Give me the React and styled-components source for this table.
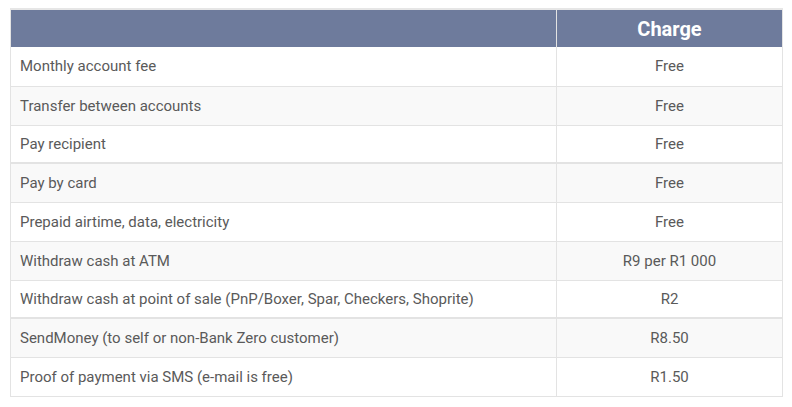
import styled, { createGlobalStyle } from "styled-components";

const rows = [
  { name: "Monthly account fee", charge: "Free" },
  { name: "Transfer between accounts", charge: "Free" },
  { name: "Pay recipient", charge: "Free", thick: true },
  { name: "Pay by card", charge: "Free" },
  { name: "Prepaid airtime, data, electricity", charge: "Free" },
  { name: "Withdraw cash at ATM", charge: "R9 per R1 000" },
  { name: "Withdraw cash at point of sale (PnP/Boxer, Spar, Checkers, Shoprite)", charge: "R2", thick: true },
  { name: "SendMoney (to self or non-Bank Zero customer)", charge: "R8.50" },
  { name: "Proof of payment via SMS (e-mail is free)", charge: "R1.50" },
];

export default function App() {
  return (
    <>
      <GlobalStyle />
      <StyledTable>
        <thead>
          <tr>
            <StyledHead />
            <StyledHead>Charge</StyledHead>
          </tr>
        </thead>
        <tbody>
          {rows.map((row, i) => (
            <StyledRow key={row.name} $odd={i % 2 === 1} $thick={row.thick}>
              <StyledCell $thick={row.thick}>{row.name}</StyledCell>
              <StyledCell $thick={row.thick} $center>{row.charge}</StyledCell>
            </StyledRow>
          ))}
        </tbody>
      </StyledTable>
    </>
  );
}

const GlobalStyle = createGlobalStyle`
  body {
    margin: 0;
    background: #ffffff;
    font-family: Roboto, "Liberation Sans", sans-serif;
  }
`;

const StyledTable = styled.table`
  margin: 8px 0 0 10px;
  width: 773px;
  border-collapse: collapse;
  border: 1px solid #e3e3e3;
  border-top: 2px solid #e6e6e6;
  table-layout: fixed;
`;

const StyledHead = styled.th`
  height: 37px;
  padding: 0;
  background: #6e7b9c;
  color: #ffffff;
  font-size: 20px;
  font-weight: 700;
  text-align: center;
  border-left: 1px solid #e3e3e3;
  &:first-child {
    width: 545px;
    border-left: none;
  }
`;

const StyledRow = styled.tr`
  background: ${(p) => (p.$odd ? "#f9f9f9" : "#ffffff")};
  border-bottom: ${(p) => (p.$thick ? "2px" : "1px")} solid #e3e3e3;
`;

const StyledCell = styled.td`
  height: ${(p) => (p.$thick ? "38px" : "39px")};
  padding: 0 9px;
  box-sizing: border-box;
  font-size: 15px;
  color: #5a5a5a;
  text-align: ${(p) => (p.$center ? "center" : "left")};
  border-left: 1px solid #e3e3e3;
  &:first-child {
    border-left: none;
  }
`;
